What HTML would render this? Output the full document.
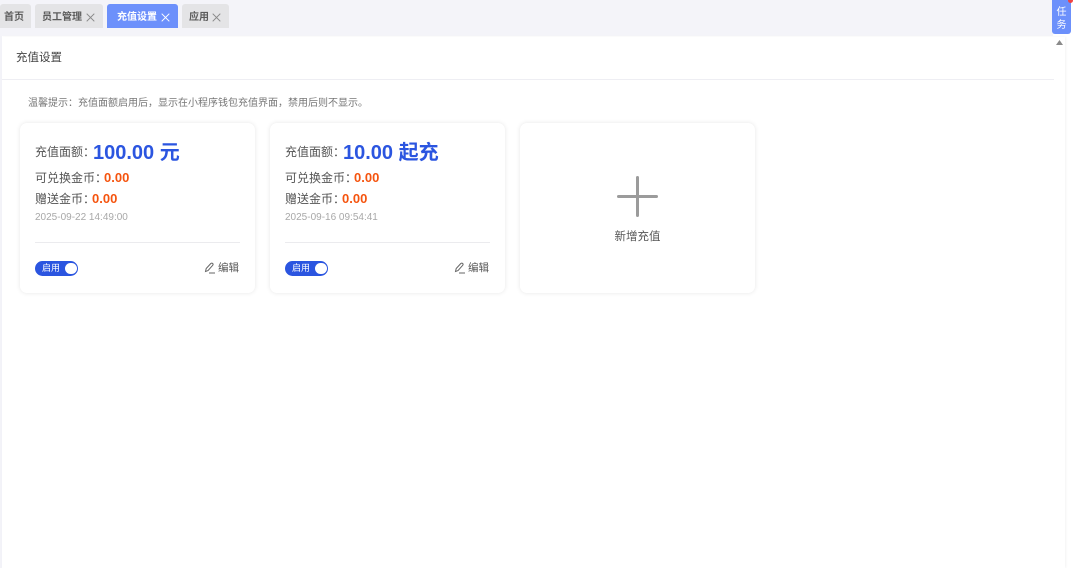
<!DOCTYPE html>
<html lang="zh-CN">
<head>
<meta charset="utf-8">
<title>充值设置</title>
<style>
html,body{margin:0;padding:0;width:1080px;height:568px;overflow:hidden;background:#fff;}
body{position:relative;font-family:"Liberation Sans","Noto Sans CJK SC",sans-serif;color:#333;}
.abs{position:absolute;white-space:nowrap;}
#top{position:absolute;left:0;top:0;width:1053px;height:36px;background:#f4f4f9;}
#leftbar{position:absolute;left:0;top:36px;width:2px;height:532px;background:#f3f3f8;}
.tab{position:absolute;top:4px;height:24px;background:#e4e4e6;border-radius:3px 3px 0 0;font-size:10px;font-weight:700;line-height:27px;color:#5c5c5c;white-space:nowrap;}
.tab.on{background:#6c90fb;color:#fff;}
.tab svg{position:absolute;top:9px;}
#panel{position:absolute;left:2px;top:37px;width:1063px;height:531px;background:#fff;box-shadow:1px 0 2px rgba(0,0,0,.05);}
#line{position:absolute;left:2px;top:79px;width:1052px;height:1px;background:#eeeef3;}
#task{position:absolute;left:1052px;top:0;width:19px;height:34px;background:#6c90fb;border-radius:0 0 3px 3px;color:#fff;font-size:10px;line-height:13px;text-align:center;padding-top:6px;box-sizing:border-box;}
#dot{position:absolute;left:1068px;top:-2px;width:5px;height:5px;border-radius:50%;background:#f04444;}
.card{position:absolute;top:123px;width:235px;height:170px;background:#fff;border-radius:7px;box-shadow:0 0 5px rgba(0,0,0,.1);}
.lb{font-size:12px;color:#555;line-height:16px;}
.big{font-size:20px;font-weight:700;color:#2b55e0;line-height:24px;}
.or{font-size:13px;font-weight:700;color:#f5540f;line-height:16px;}
.dt{font-size:10px;color:#a8a8a8;line-height:14px;}
.hr{position:absolute;left:15px;top:119px;width:205px;height:1px;background:#ebebee;}
.sw{position:absolute;left:15px;top:138px;width:43px;height:15px;border-radius:8px;background:#2b55e0;color:#fff;font-size:9px;line-height:15px;text-indent:7px;}
.sw i{position:absolute;left:30px;top:1.75px;width:11.5px;height:11.5px;border-radius:50%;background:#fff;}
.ed{font-size:10.5px;color:#555;line-height:14px;}
</style>
</head>
<body>
<div id="top"></div>
<div id="leftbar"></div>

<div class="tab" style="left:0;width:31px;text-indent:4px;">首页</div>
<div class="tab" style="left:35px;width:68px;text-indent:7px;">员工管理
<svg style="left:51px" width="9" height="9" viewBox="0 0 9 9"><path d="M.7.7l7.6 7.6M8.3.7L.7 8.3" stroke="#888" stroke-width="1" fill="none"/></svg></div>
<div class="tab on" style="left:107px;width:71px;text-indent:10px;">充值设置
<svg style="left:54px" width="9" height="9" viewBox="0 0 9 9"><path d="M.7.7l7.6 7.6M8.3.7L.7 8.3" stroke="#fff" stroke-width="1" fill="none"/></svg></div>
<div class="tab" style="left:182px;width:47px;text-indent:7px;">应用
<svg style="left:30px" width="9" height="9" viewBox="0 0 9 9"><path d="M.7.7l7.6 7.6M8.3.7L.7 8.3" stroke="#888" stroke-width="1" fill="none"/></svg></div>

<div id="panel"></div>
<div id="line"></div>
<svg class="abs" style="left:1056px;top:40px" width="7" height="5" viewBox="0 0 7 5"><path d="M3.5 0L7 5H0z" fill="#8a8a8a"/></svg>

<div id="task">任<br>务</div>
<div id="dot"></div>

<div class="abs" style="left:16px;top:50px;font-size:11.5px;line-height:16px;color:#444;">充值设置</div>
<div class="abs" style="left:28px;top:97px;font-size:10px;line-height:14px;color:#777;">温馨提示：充值面额启用后，显示在小程序钱包充值界面，禁用后则不显示。</div>

<div class="card" style="left:20px;">
  <div class="abs lb" style="left:15px;top:21px;">充值面额：</div>
  <div class="abs big" style="left:73px;top:18px;">100.00 元</div>
  <div class="abs lb" style="left:15px;top:47px;">可兑换金币：</div>
  <div class="abs or" style="left:84px;top:47px;">0.00</div>
  <div class="abs lb" style="left:15px;top:68px;">赠送金币：</div>
  <div class="abs or" style="left:72px;top:68px;">0.00</div>
  <div class="abs dt" style="left:15px;top:88px;">2025-09-22 14:49:00</div>
  <div class="hr"></div>
  <div class="sw">启用<i></i></div>
  <svg class="abs" style="left:184px;top:139px" width="12" height="12" viewBox="0 0 12 12"><path d="M1.5 9.5L2.2 6.5 6.8 1.5Q7.8.7 8.7 1.5 9.5 2.4 8.7 3.3L4 8.6 1.5 9.5zM5 11h6" stroke="#666" stroke-width="1" fill="none"/></svg>
  <div class="abs ed" style="left:198px;top:138px;">编辑</div>
</div>

<div class="card" style="left:270px;">
  <div class="abs lb" style="left:15px;top:21px;">充值面额：</div>
  <div class="abs big" style="left:73px;top:18px;">10.00 起充</div>
  <div class="abs lb" style="left:15px;top:47px;">可兑换金币：</div>
  <div class="abs or" style="left:84px;top:47px;">0.00</div>
  <div class="abs lb" style="left:15px;top:68px;">赠送金币：</div>
  <div class="abs or" style="left:72px;top:68px;">0.00</div>
  <div class="abs dt" style="left:15px;top:88px;">2025-09-16 09:54:41</div>
  <div class="hr"></div>
  <div class="sw">启用<i></i></div>
  <svg class="abs" style="left:184px;top:139px" width="12" height="12" viewBox="0 0 12 12"><path d="M1.5 9.5L2.2 6.5 6.8 1.5Q7.8.7 8.7 1.5 9.5 2.4 8.7 3.3L4 8.6 1.5 9.5zM5 11h6" stroke="#666" stroke-width="1" fill="none"/></svg>
  <div class="abs ed" style="left:198px;top:138px;">编辑</div>
</div>

<div class="card" style="left:520px;">
  <svg class="abs" style="left:96px;top:52px" width="43" height="43" viewBox="0 0 43 43"><path d="M21.5 2.5v38M2.5 21.5h38" stroke="#9b9b9b" stroke-width="3" stroke-linecap="round" fill="none"/></svg>
  <div class="abs" style="left:0;top:106px;width:235px;text-align:center;font-size:11.5px;line-height:16px;color:#555;">新增充值</div>
</div>
</body>
</html>
